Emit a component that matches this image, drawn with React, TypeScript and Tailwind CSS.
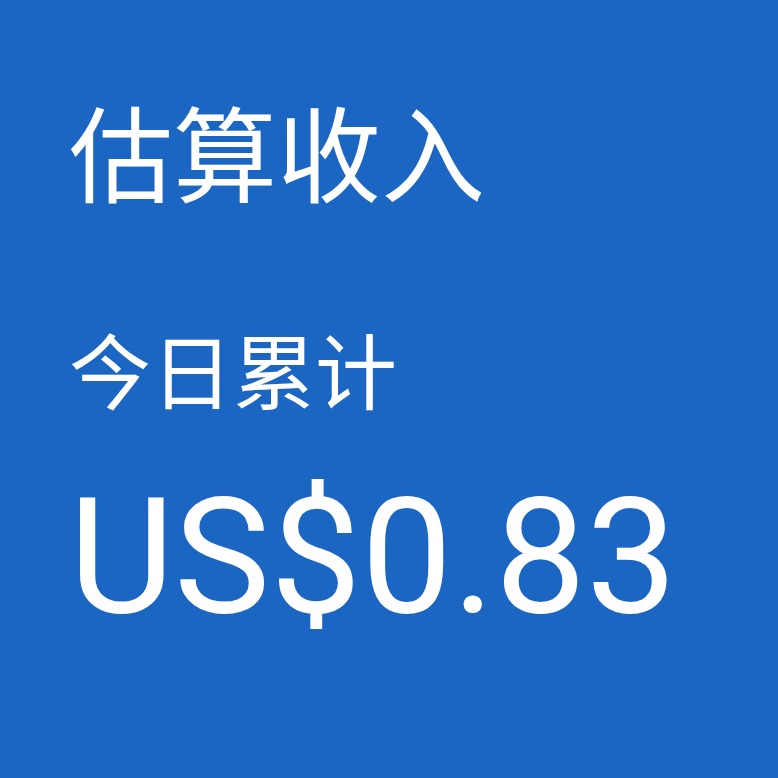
export default function App() {
  return (
    <div className="w-[778px] h-[778px] bg-[#1a66c2] text-white pl-[69px] pt-[108px] flex flex-col" style={{ fontFamily: 'Roboto, "Noto Sans CJK SC", sans-serif' }}>
      <h1 className="text-[104px] leading-none font-normal">估算收入</h1>
      <p className="mt-[122px] text-[82px] leading-none">今日累计</p>
      <p className="mt-[60px] text-[162px] leading-none">US$0.83</p>
    </div>
  );
}
